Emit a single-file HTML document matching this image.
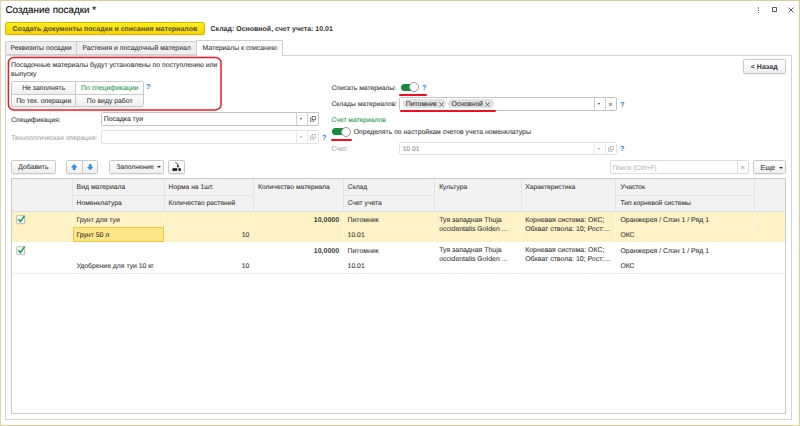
<!DOCTYPE html>
<html lang="ru"><head><meta charset="utf-8"><title>Создание посадки</title>
<style>
html,body{margin:0;padding:0}
body{width:800px;height:426px;position:relative;overflow:hidden;background:#fff;font-family:"Liberation Sans",sans-serif;font-size:6.85px;color:#383838;-webkit-text-stroke-width:0.08px;text-rendering:geometricPrecision}
.a{position:absolute;box-sizing:border-box}
.t{position:absolute;white-space:nowrap;line-height:10px;height:10px;margin-top:1.6px}
.b{font-weight:bold;font-size:7px;-webkit-text-stroke-width:0}
.g{color:#1d9a4a}
.q{color:#3a8cd8;font-weight:bold;-webkit-text-stroke-width:0;font-size:7.4px;margin-top:1.4px;margin-left:-0.9px}
.dis{color:#a9a9a9}
.btn{position:absolute;box-sizing:border-box;border:1px solid #c9c9c9;border-radius:1.5px;background:linear-gradient(#ffffff,#eeeeee);text-align:center;line-height:14.6px;white-space:nowrap;box-shadow:0 0.5px 0.5px rgba(0,0,0,.12)}
.inp{position:absolute;box-sizing:border-box;border:1px solid #c4c4c4;border-radius:1.5px;background:#fff}
.hl{position:absolute;height:1px;background:#e3e3e3}
.vl{position:absolute;width:1px;background:#e3e3e3}
.red{position:absolute;background:#f2101c;height:1.8px;border-radius:1px;margin-top:-0.3px}
</style></head><body>
<!-- window frame -->
<div class="a" style="left:0;top:0;width:800px;height:426px;border:1px solid #d9cc96;border-left-color:#e0d6a6"></div>

<!-- title -->
<div class="t" style="left:5.4px;top:3.9px;font-size:9.9px;line-height:12px;height:12px;color:#111;-webkit-text-stroke:0.15px #111">Создание посадки *</div>
<!-- window controls -->
<svg class="a" style="left:757px;top:6.5px" width="3" height="7" viewBox="0 0 3 7"><circle cx="1.4" cy="1" r="0.65" fill="#444"/><circle cx="1.4" cy="3.3" r="0.65" fill="#444"/><circle cx="1.4" cy="5.6" r="0.65" fill="#444"/></svg>
<div class="a" style="left:772px;top:7.3px;width:5.4px;height:5.2px;border:0.75px solid #5a5a5a;border-radius:0.8px"></div>
<svg class="a" style="left:787.5px;top:7.2px" width="6" height="6" viewBox="0 0 6 6"><path d="M0.5 0.5L5.5 5.5M5.5 0.5L0.5 5.5" stroke="#555" stroke-width="0.9" fill="none"/></svg>

<!-- yellow button -->
<div class="a b" style="left:4.9px;top:22.1px;width:200px;height:13.4px;border:1px solid #d6b900;border-radius:2px;background:linear-gradient(#ffec22,#f5d300);text-align:center;line-height:13.4px;white-space:nowrap;color:#57512a;box-shadow:0 0.5px 0.5px rgba(0,0,0,.15)">Создать документы посадки и списания материалов</div>
<div class="t b" style="left:210.5px;top:23.8px;color:#333">Склад: Основной, счет учета: 10.01</div>

<!-- tab panel -->
<div class="a" style="left:5px;top:54.5px;width:786.5px;height:365.3px;border:1px solid #d3d3d3;background:#fff"></div>
<!-- tabs -->
<div class="a" style="left:5px;top:41.3px;width:72px;height:14.2px;border:1px solid #cfcfcf;background:#efefef;text-align:center;line-height:14px;white-space:nowrap;border-radius:1.5px 0 0 0">Реквизиты посадки</div>
<div class="a" style="left:76px;top:41.3px;width:121.2px;height:14.2px;border:1px solid #cfcfcf;background:#efefef;text-align:center;line-height:14px;white-space:nowrap">Растения и посадочный материал</div>
<div class="a" style="left:196.2px;top:40.1px;width:86.8px;height:15.6px;border:1px solid #cfcfcf;border-bottom:none;background:#fff;text-align:center;line-height:15.6px;white-space:nowrap;border-radius:0 1.5px 0 0">Материалы к списанию</div>

<!-- red annotation box -->
<svg class="a" style="left:0;top:50px" width="230" height="65" viewBox="0 50 230 65"><rect x="8.4" y="57.4" width="212.6" height="52.5" rx="5.5" ry="5.5" fill="none" stroke="#fa141e" stroke-width="1.5"/></svg>
<div class="t" style="left:11px;top:59.7px">Посадочные материалы будут установлены по поступлению или</div>
<div class="t" style="left:11px;top:68.2px">выпуску</div>
<!-- button group -->
<div class="btn" style="left:11px;top:81px;width:65.4px;height:14px;border-radius:1.5px 0 0 0">Не заполнять</div>
<div class="btn g" style="left:75.4px;top:81px;width:68.6px;height:14px;border-radius:0 1.5px 0 0;background:#fff">По спецификации</div>
<div class="btn" style="left:11px;top:94px;width:65.4px;height:13px;border-radius:0 0 0 1.5px">По тех. операции</div>
<div class="btn" style="left:75.4px;top:94px;width:68.6px;height:13px;border-radius:0 0 1.5px 0">По виду работ</div>
<div class="t q" style="left:146.8px;top:80.2px">?</div>

<!-- left fields -->
<div class="t" style="left:11.2px;top:114.2px;font-size:6.75px">Спецификация:</div>
<div class="inp" style="left:101px;top:112px;width:218px;height:14px"></div>
<div class="vl" style="left:296px;top:113px;height:12px;background:#d0d0d0"></div>
<div class="vl" style="left:307px;top:113px;height:12px;background:#d0d0d0"></div>
<div class="t" style="left:103.8px;top:113.8px;color:#2e2e2e">Посадка туи</div>
<div class="a" style="left:299.8px;top:118.2px;width:0;height:0;border-left:1.9px solid transparent;border-right:1.9px solid transparent;border-top:2.4px solid #444"></div>
<svg class="a" style="left:309.6px;top:116.2px" width="6" height="6" viewBox="0 0 6 6"><rect x="0.5" y="2" width="3.4" height="3.2" fill="#fff" stroke="#555" stroke-width="0.7"/><rect x="2.2" y="0.6" width="3.3" height="3.1" fill="#fff" stroke="#555" stroke-width="0.7"/></svg>

<div class="t dis" style="left:11.2px;top:132.8px;font-size:6.68px">Технологическая операция:</div>
<div class="inp" style="left:101px;top:130px;width:218px;height:14px;border-color:#e2e2e2"></div>
<div class="vl" style="left:296px;top:131px;height:12px;background:#e8e8e8"></div>
<div class="vl" style="left:307px;top:131px;height:12px;background:#e8e8e8"></div>
<div class="a" style="left:299.8px;top:136.2px;width:0;height:0;border-left:1.9px solid transparent;border-right:1.9px solid transparent;border-top:2.4px solid #aaa"></div>
<svg class="a" style="left:309.6px;top:134.2px" width="6" height="6" viewBox="0 0 6 6"><rect x="0.5" y="2" width="3.4" height="3.2" fill="#fff" stroke="#b0b0b0" stroke-width="0.7"/><rect x="2.2" y="0.6" width="3.3" height="3.1" fill="#fff" stroke="#b0b0b0" stroke-width="0.7"/></svg>
<div class="t q" style="left:322.8px;top:131.3px">?</div>

<!-- right fields -->
<div class="t" style="left:331.4px;top:82.1px;font-size:6.75px">Списать материалы:</div>
<div class="a" style="left:400.8px;top:84.2px;width:17.4px;height:6.9px;border-radius:3.5px;background:#178a3e"></div>
<div class="a" style="left:409.2px;top:82.4px;width:9.8px;height:10px;border-radius:5px;background:#fff;border:0.8px solid #9a9a9a"></div>
<div class="t q" style="left:423px;top:82px">?</div>
<div class="red" style="left:398.8px;top:94px;width:28.2px"></div>

<div class="t" style="left:331.4px;top:98.6px;font-size:6.75px">Склады материалов:</div>
<div class="inp" style="left:399px;top:97px;width:218px;height:14px"></div>
<div class="vl" style="left:594px;top:98px;height:12px;background:#d0d0d0"></div>
<div class="vl" style="left:605px;top:98px;height:12px;background:#d0d0d0"></div>
<div class="a" style="left:597.8px;top:103px;width:0;height:0;border-left:1.9px solid transparent;border-right:1.9px solid transparent;border-top:2.4px solid #444"></div>
<div class="t" style="left:608.2px;top:98.6px;font-size:7.6px;color:#666">×</div>
<div class="a" style="left:402.8px;top:99.4px;width:43px;height:9px;border-radius:4.5px;background:#e2e2e2"></div>
<div class="t" style="left:405.8px;top:98.9px;color:#2e2e2e">Питомник <svg style="position:relative;top:0.2px;margin-left:0.6px" width="5" height="5" viewBox="0 0 5 5"><path d="M0.4 0.4L4.6 4.6M4.6 0.4L0.4 4.6" stroke="#444" stroke-width="0.75" fill="none"/></svg></div>
<div class="a" style="left:448px;top:99.4px;width:45.5px;height:9px;border-radius:4.5px;background:#e2e2e2"></div>
<div class="t" style="left:451.4px;top:98.9px;color:#2e2e2e">Основной <svg style="position:relative;top:0.2px;margin-left:0.6px" width="5" height="5" viewBox="0 0 5 5"><path d="M0.4 0.4L4.6 4.6M4.6 0.4L0.4 4.6" stroke="#444" stroke-width="0.75" fill="none"/></svg></div>
<div class="t q" style="left:621px;top:98.6px">?</div>
<div class="red" style="left:399.8px;top:110.2px;width:96.4px"></div>

<div class="t g" style="left:331.6px;top:114.6px;font-size:6.72px">Счет материалов</div>
<div class="a" style="left:332.2px;top:128.2px;width:17.4px;height:6.9px;border-radius:3.5px;background:#178a3e"></div>
<div class="a" style="left:341px;top:126.6px;width:9.8px;height:10px;border-radius:5px;background:#fff;border:0.8px solid #9a9a9a"></div>
<div class="t" style="left:353.8px;top:126.6px">Определять по настройкам счетов учета номенклатуры</div>
<div class="red" style="left:331px;top:139px;width:20.5px"></div>

<div class="t dis" style="left:331.6px;top:143.4px">Счет:</div>
<div class="inp" style="left:399px;top:142px;width:218px;height:13.4px;border-color:#e2e2e2"></div>
<div class="vl" style="left:594px;top:143px;height:11.4px;background:#e8e8e8"></div>
<div class="vl" style="left:605px;top:143px;height:11.4px;background:#e8e8e8"></div>
<div class="a" style="left:597.8px;top:147.6px;width:0;height:0;border-left:1.9px solid transparent;border-right:1.9px solid transparent;border-top:2.4px solid #999"></div>
<svg class="a" style="left:607.6px;top:145.6px" width="6" height="6" viewBox="0 0 6 6"><rect x="0.5" y="2" width="3.4" height="3.2" fill="#fff" stroke="#aaa" stroke-width="0.7"/><rect x="2.2" y="0.6" width="3.3" height="3.1" fill="#fff" stroke="#aaa" stroke-width="0.7"/></svg>
<div class="t" style="left:402.4px;top:143.2px;color:#8f8f8f">10.01</div>
<div class="t q" style="left:621px;top:143px">?</div>

<!-- back button -->
<div class="btn b" style="left:742.5px;top:59.4px;width:43.4px;height:14.3px;line-height:15.6px">&lt; Назад</div>

<!-- toolbar -->
<div class="btn" style="left:11.2px;top:160.2px;width:44.5px;height:13.4px">Добавить</div>
<div class="btn" style="left:66.2px;top:160.2px;width:16.4px;height:13.4px;border-radius:1.5px 0 0 1.5px"></div>
<div class="btn" style="left:81.6px;top:160.2px;width:16.6px;height:13.4px;border-radius:0 1.5px 1.5px 0"></div>
<svg class="a" style="left:71.2px;top:163.8px" width="6.4" height="6.4" viewBox="0 0 7 7"><path d="M3.5 0.3L6.6 3.6H4.7V6.6H2.3V3.6H0.4Z" fill="#2b93e6" stroke="#1d78c8" stroke-width="0.4" stroke-linejoin="round"/></svg>
<svg class="a" style="left:86.8px;top:163.8px" width="6.4" height="6.4" viewBox="0 0 7 7"><path d="M3.5 6.7L6.6 3.4H4.7V0.4H2.3V3.4H0.4Z" fill="#2b93e6" stroke="#1d78c8" stroke-width="0.4" stroke-linejoin="round"/></svg>
<div class="btn" style="left:108.8px;top:160.2px;width:55.2px;height:13.4px;text-align:left;padding-left:6.6px;font-size:6.7px">Заполнение</div>
<div class="a" style="left:156.6px;top:166.4px;width:0;height:0;border-left:2px solid transparent;border-right:2px solid transparent;border-top:2.3px solid #333"></div>
<div class="btn" style="left:168.4px;top:160.2px;width:16.6px;height:13.6px"></div>
<svg class="a" style="left:171.5px;top:162px" width="10" height="10" viewBox="0 0 10 10"><rect x="0.5" y="6.2" width="8.3" height="2.7" fill="#1c1c1c"/><rect x="5.2" y="6.1" width="1.3" height="2.9" fill="#f4f4f4"/><path d="M3.4 0.7C5.3 1.1 6 2.3 6 4.4" fill="none" stroke="#1c1c1c" stroke-width="0.9"/><path d="M4.6 3.7L6 5.7L7.3 3.7Z" fill="#1c1c1c"/></svg>

<div class="inp" style="left:610.4px;top:160.2px;width:138.6px;height:13.6px;border-color:#dcdcdc"></div>
<div class="vl" style="left:737px;top:161.2px;height:11.6px;background:#e0e0e0"></div>
<div class="t" style="left:612.4px;top:162px;color:#b9b9b9">Поиск (Ctrl+F)</div>
<div class="t" style="left:740.5px;top:161.6px;font-size:7.6px;color:#a5a5a5">×</div>
<div class="btn" style="left:753.2px;top:160.2px;width:32.4px;height:13.6px;text-align:left;padding-left:6.2px;font-size:7.2px">Еще</div>
<div class="a" style="left:778.8px;top:166.6px;width:0;height:0;border-left:2px solid transparent;border-right:2px solid transparent;border-top:2.3px solid #333"></div>

<!-- table -->
<div class="a" style="left:11.2px;top:178.2px;width:775px;height:235.4px;border:1px solid #cbcbcb;background:#fff"></div>
<div class="a" style="left:12.2px;top:179.2px;width:773px;height:32.2px;background:#f2f2f2"></div>
<!-- selected row -->
<div class="a" style="left:12.2px;top:211.8px;width:773px;height:30px;background:#fdf1c6"></div>
<!-- header lines -->
<div class="hl" style="left:12.2px;top:211.2px;width:773px;background:#dedee2"></div>
<div class="hl" style="left:72.5px;top:194.8px;width:181px"></div>
<div class="hl" style="left:343.2px;top:194.8px;width:91.4px"></div>
<div class="hl" style="left:615.5px;top:194.8px;width:138.6px"></div>
<div class="vl" style="left:72.4px;top:179.2px;height:32px"></div>
<div class="vl" style="left:164.2px;top:179.2px;height:32px"></div>
<div class="vl" style="left:253.2px;top:179.2px;height:32px"></div>
<div class="vl" style="left:343.2px;top:179.2px;height:32px"></div>
<div class="vl" style="left:434.4px;top:179.2px;height:32px"></div>
<div class="vl" style="left:520.8px;top:179.2px;height:32px"></div>
<div class="vl" style="left:615.4px;top:179.2px;height:32px"></div>
<div class="vl" style="left:753.8px;top:179.2px;height:32px"></div>
<!-- selected row light lines -->
<div class="hl" style="left:72.5px;top:226.6px;width:181px;background:#fff8e0"></div>
<div class="hl" style="left:343.2px;top:226.6px;width:91.4px;background:#fff8e0"></div>
<div class="hl" style="left:615.5px;top:226.6px;width:138.6px;background:#fff8e0"></div>
<div class="vl" style="left:72.4px;top:211.8px;height:30px;background:#fff8e0"></div>
<div class="vl" style="left:164.2px;top:211.8px;height:30px;background:#fff8e0"></div>
<div class="vl" style="left:253.2px;top:211.8px;height:30px;background:#fff8e0"></div>
<div class="vl" style="left:343.2px;top:211.8px;height:30px;background:#fff8e0"></div>
<div class="vl" style="left:434.4px;top:211.8px;height:30px;background:#fff8e0"></div>
<div class="vl" style="left:520.8px;top:211.8px;height:30px;background:#fff8e0"></div>
<div class="vl" style="left:615.4px;top:211.8px;height:30px;background:#fff8e0"></div>
<div class="vl" style="left:753.8px;top:211.8px;height:30px;background:#fff8e0"></div>
<div class="hl" style="left:12.2px;top:272.6px;width:773px;background:#ececec"></div>
<!-- active cell -->
<div class="a" style="left:72.8px;top:227px;width:91px;height:14.8px;background:#fde589;border:1px solid #f4c735"></div>

<!-- header text -->
<div class="t" style="left:76.6px;top:181.2px">Вид материала</div>
<div class="t" style="left:76.6px;top:197.5px;font-size:6.72px">Номенклатура</div>
<div class="t" style="left:168.6px;top:181.2px;font-size:6.72px">Норма на 1шт.</div>
<div class="t" style="left:168.6px;top:197.5px;font-size:6.72px">Количество растений</div>
<div class="t" style="left:258px;top:181.2px;font-size:6.72px">Количество материала</div>
<div class="t" style="left:347.8px;top:181.2px;font-size:6.72px">Склад</div>
<div class="t" style="left:347.8px;top:197.5px;font-size:6.72px">Счет учета</div>
<div class="t" style="left:439.2px;top:181.3px;font-size:6.75px">Культура</div>
<div class="t" style="left:525.2px;top:181.3px;font-size:6.75px">Характеристика</div>
<div class="t" style="left:620.4px;top:181.2px;font-size:6.72px">Участок</div>
<div class="t" style="left:620.4px;top:197.5px;font-size:6.72px">Тип корневой системы</div>

<!-- row 1 -->
<svg class="a" style="left:16px;top:213.6px" width="11" height="11" viewBox="0 0 11 11"><rect x="0.7" y="1.7" width="8" height="8" rx="1" fill="#fff" stroke="#a8a8a8" stroke-width="0.8"/><path d="M2.4 5.2L4.4 7.6L8.6 1.6" fill="none" stroke="#149a45" stroke-width="1.5"/></svg>
<div class="t" style="left:76.4px;top:214.6px">Грунт для туи</div>
<div class="t" style="left:76.4px;top:229.6px;color:#2e2e2e">Грунт 50 л</div>
<div class="t" style="right:550.7px;top:229.6px">10</div>
<div class="t b" style="right:460.9px;top:214.6px">10,0000</div>
<div class="t" style="left:347.6px;top:214.6px">Питомник</div>
<div class="t" style="left:347.6px;top:229.6px">10.01</div>
<div class="t" style="left:439.2px;top:214.6px;font-size:6.94px">Туя западная Thuja</div>
<div class="t" style="left:439.2px;top:223.6px;font-size:6.94px">occidentalis Golden ...</div>
<div class="t" style="left:525.2px;top:214.6px;font-size:6.94px">Корневая система: ОКС;</div>
<div class="t" style="left:525.2px;top:223.6px;font-size:6.94px">Обхват ствола: 10; Рост:...</div>
<div class="t" style="left:620.4px;top:214.6px;font-size:6.94px">Оранжерея / Слэн 1 / Ряд 1</div>
<div class="t" style="left:620.4px;top:229.6px">ОКС</div>

<!-- row 2 -->
<svg class="a" style="left:16px;top:244.6px" width="11" height="11" viewBox="0 0 11 11"><rect x="0.7" y="1.7" width="8" height="8" rx="1" fill="#fff" stroke="#a8a8a8" stroke-width="0.8"/><path d="M2.4 5.2L4.4 7.6L8.6 1.6" fill="none" stroke="#149a45" stroke-width="1.5"/></svg>
<div class="t" style="left:76.4px;top:260.4px">Удобрение для туи 10 кг</div>
<div class="t" style="right:550.7px;top:260.4px">10</div>
<div class="t b" style="right:460.9px;top:245.8px">10,0000</div>
<div class="t" style="left:347.6px;top:245.8px">Питомник</div>
<div class="t" style="left:347.6px;top:260.4px">10.01</div>
<div class="t" style="left:439.2px;top:244.8px;font-size:6.94px">Туя западная Thuja</div>
<div class="t" style="left:439.2px;top:253.4px;font-size:6.94px">occidentalis Golden ...</div>
<div class="t" style="left:525.2px;top:244.8px;font-size:6.94px">Корневая система: ОКС;</div>
<div class="t" style="left:525.2px;top:253.4px;font-size:6.94px">Обхват ствола: 10; Рост:...</div>
<div class="t" style="left:620.4px;top:245.8px;font-size:6.94px">Оранжерея / Слэн 1 / Ряд 1</div>
<div class="t" style="left:620.4px;top:260.4px">ОКС</div>
</body></html>
